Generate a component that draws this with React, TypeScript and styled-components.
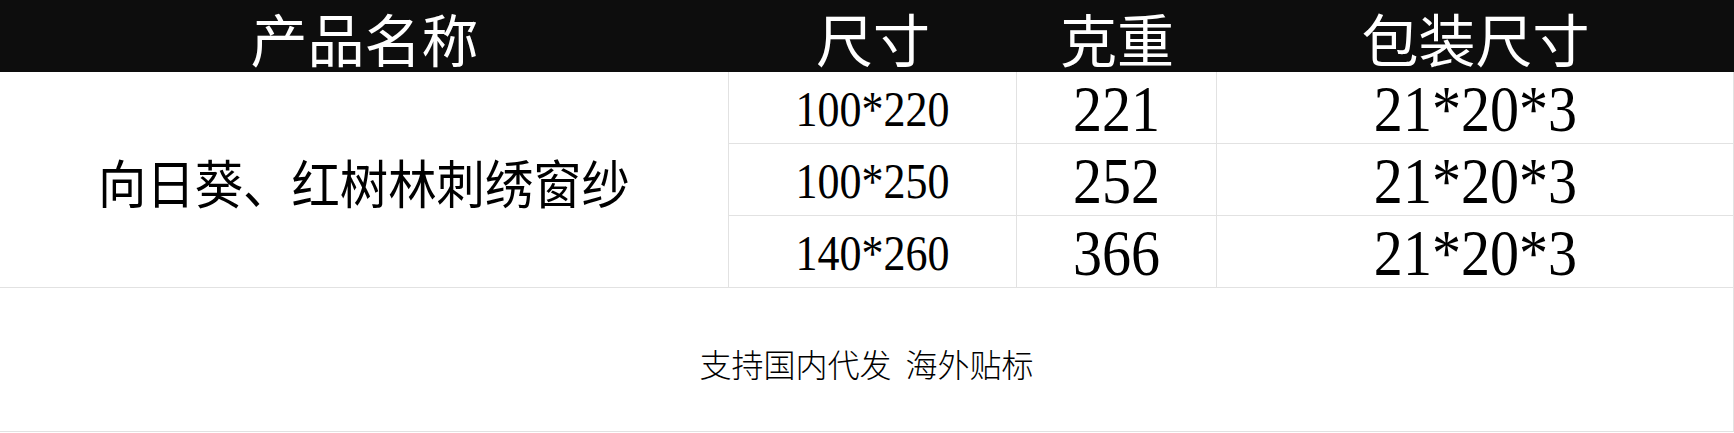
import styled, { createGlobalStyle } from "styled-components";

const GlobalStyle = createGlobalStyle`
  html, body {
    margin: 0;
    padding: 0;
    background: #ffffff;
  }
`;

const COLUMNS = "729px 288px 200px 517px";
const LINE = "#e2e2e2";

const Sheet = styled.div`
  width: 1734px;
  font-family: "Noto Sans CJK SC", "Liberation Serif", sans-serif;
  color: #000;
`;

const HeaderRow = styled.div`
  display: grid;
  grid-template-columns: ${COLUMNS};
  height: 72px;
  background: #0d0d0d;
`;

const HeaderCell = styled.div`
  display: flex;
  align-items: center;
  justify-content: center;
  color: #ffffff;
  font-size: 57px;
  line-height: 1.2;
  padding-top: 2px;
`;

const Body = styled.div`
  display: grid;
  grid-template-columns: ${COLUMNS};
  grid-template-rows: repeat(3, 72px);
`;

const Cell = styled.div`
  box-sizing: border-box;
  display: flex;
  align-items: center;
  justify-content: center;
  border-right: 1px solid ${LINE};
  border-bottom: 1px solid ${LINE};
`;

const NameCell = styled(Cell)`
  grid-row: 1 / span 3;
  font-size: 52px;
  padding-top: 4px;
`;

const Num = styled.span<{ $size: number }>`
  display: inline-block;
  font-family: "Liberation Serif", "Times New Roman", serif;
  font-size: ${(p) => p.$size}px;
  line-height: 1.1;
  transform: scaleX(0.88);
  padding-top: 4px;
`;

const Condensed = styled.span`
  display: inline-block;
  transform: scaleX(0.93);
  white-space: nowrap;
`;

const Footer = styled.div`
  box-sizing: border-box;
  height: 144px;
  display: flex;
  align-items: center;
  justify-content: center;
  border-right: 1px solid ${LINE};
  border-bottom: 1px solid ${LINE};
  font-size: 32px;
  font-weight: 300;
  padding-top: 6px;
  white-space: pre;
`;

const rows = [
  { size: "100*220", weight: "221", pack: "21*20*3" },
  { size: "100*250", weight: "252", pack: "21*20*3" },
  { size: "140*260", weight: "366", pack: "21*20*3" },
];

export default function App() {
  return (
    <Sheet>
      <GlobalStyle />
      <HeaderRow>
        <HeaderCell>产品名称</HeaderCell>
        <HeaderCell>尺寸</HeaderCell>
        <HeaderCell>克重</HeaderCell>
        <HeaderCell>包装尺寸</HeaderCell>
      </HeaderRow>
      <Body>
        <NameCell>
          <Condensed>向日葵、红树林刺绣窗纱</Condensed>
        </NameCell>
        {rows.map((r, i) => (
          <div key={i} style={{ display: "contents" }}>
            <Cell>
              <Num $size={50}>{r.size}</Num>
            </Cell>
            <Cell>
              <Num $size={66}>{r.weight}</Num>
            </Cell>
            <Cell>
              <Num $size={66}>{r.pack}</Num>
            </Cell>
          </div>
        ))}
      </Body>
      <Footer>{"支持国内代发  海外贴标"}</Footer>
    </Sheet>
  );
}
